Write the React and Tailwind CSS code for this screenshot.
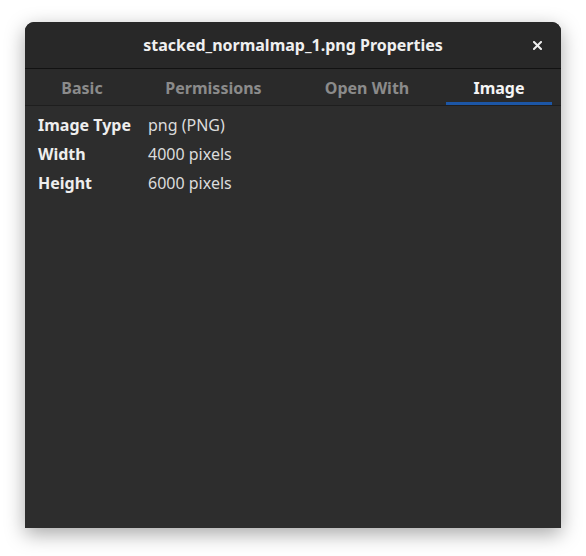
import React from "react";

const tabs = [
  { label: "Basic", w: "w-[114px]" },
  { label: "Permissions", w: "w-[149px]" },
  { label: "Open With", w: "w-[158px]" },
  { label: "Image", w: "w-[106px]" },
];

const rows = [
  ["Image Type", "png (PNG)"],
  ["Width", "4000 pixels"],
  ["Height", "6000 pixels"],
];

export default function App() {
  return (
    <div
      className="w-[586px] h-[556px] bg-white pt-[22px] pl-[25px]"
      style={{ fontFamily: "'Noto Sans', sans-serif" }}
    >
      <div className="w-[536px] h-[506px] flex flex-col rounded-t-[9px] bg-[#2d2d2d] shadow-[0_6px_20px_rgba(0,0,0,0.35)] overflow-hidden">
        <div className="h-[47px] shrink-0 bg-[#282828] border-b border-[#121212] flex items-center relative">
          <div className="flex-1 text-center text-[16px] font-bold text-[#f0f0f0]">
            stacked_normalmap_1.png Properties
          </div>
          <button className="absolute right-[18px] top-[17px] w-[12px] h-[12px] flex items-center justify-center text-[#eeeeee]">
            <svg width="9" height="9" viewBox="0 0 9 9">
              <path d="M1 1 L8 8 M8 1 L1 8" stroke="currentColor" strokeWidth="2" strokeLinecap="square" />
            </svg>
          </button>
        </div>
        <div className="h-[37px] shrink-0 bg-[#2a2a2a] border-b border-[#1e1e1e] flex">
          {tabs.map((t, i) => (
            <div
              key={t.label}
              className={`${t.w} shrink-0 flex items-center justify-center pt-[4px] text-[16px] font-bold border-b-[3px] ${
                i === 3
                  ? "text-[#f5f5f5] border-[#1c56a6]"
                  : "text-[#8b8b8b] border-transparent"
              }`}
            >
              {t.label}
            </div>
          ))}
        </div>
        <div className="flex-1 pt-[4px] pl-[13px]">
          {rows.map(([k, v]) => (
            <div key={k} className="flex h-[29px] items-center text-[16px]">
              <div className="w-[110px] font-bold text-[#eeeeee]">{k}</div>
              <div className="text-[#dcdcdc]">{v}</div>
            </div>
          ))}
        </div>
      </div>
    </div>
  );
}
